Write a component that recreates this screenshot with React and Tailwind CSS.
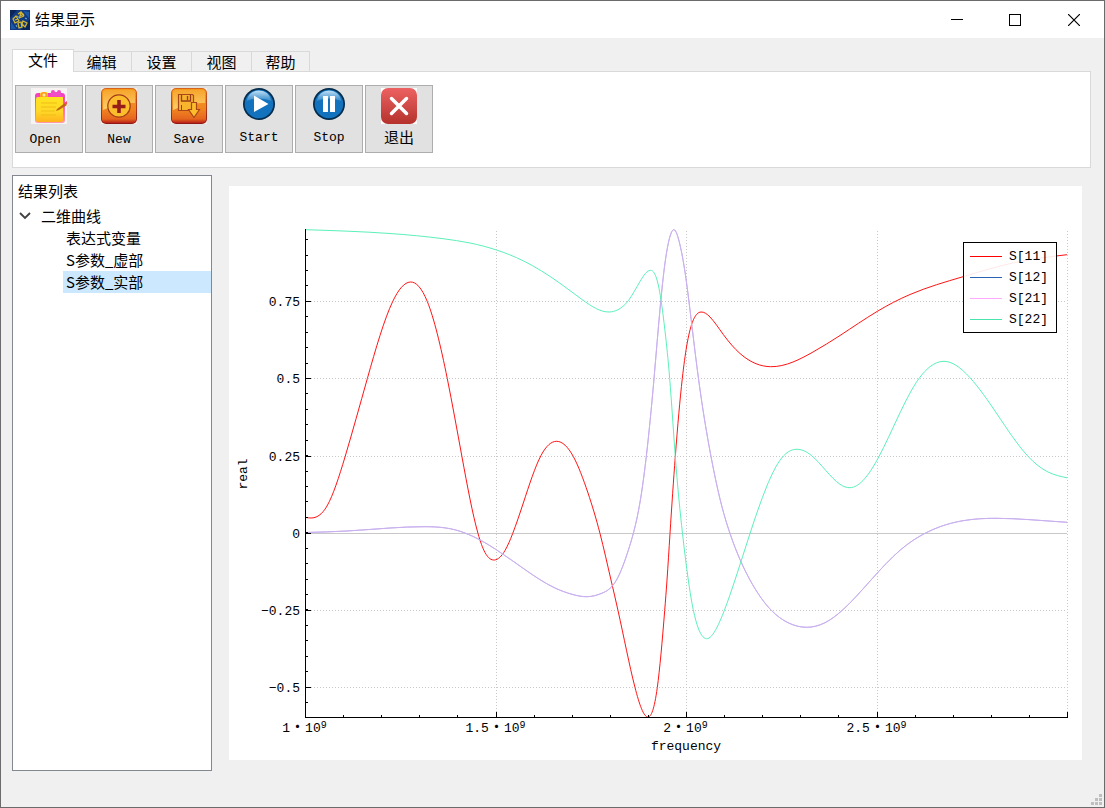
import { useState } from 'react'

const TABS = ['文件', '编辑', '设置', '视图', '帮助']

const UI_FONT = "font-['Noto_Sans_CJK_SC',sans-serif]"
const MONO_FONT = "font-['Liberation_Mono','Noto_Sans_CJK_SC',monospace]"

const RESULTS = ['表达式变量', 'S参数_虚部', 'S参数_实部']

const TRANSMISSION = [
  [306, 532.5], [347, 531], [390, 528], [425, 526.7], [446, 528], [465, 533], [496, 549.5], [527, 571], [555, 588],
  [572, 594.3], [587, 596.7], [602, 593.2], [616.5, 580], [628.5, 549.7], [633.3, 533.5], [641.5, 493], [646.3, 456.5],
  [654, 378.7], [660.3, 306], [665, 263], [668.3, 243.3], [674, 229.7], [680, 245], [685, 272], [692, 326.7],
  [698.5, 378.7], [711, 456.5], [720, 499], [730, 533.5], [750, 580], [771.5, 610.5], [788, 622.7], [806.7, 627.3],
  [825, 622.7], [842.3, 610.3], [871, 580], [900.7, 549.7], [925, 533.3], [940, 526.7], [963, 520.7], [996, 518.3],
  [1030, 519.7], [1067, 522.3],
]

const SERIES = [
  {
    name: 'S[11]',
    legend: '#ff0000',
    stroke: '#ff1414',
    points: [
      [306, 517.5], [311, 518], [327, 506], [345, 457], [367.3, 378.7], [392.7, 301.5], [410.3, 282], [427.3, 301.5],
      [447.3, 378.7], [462, 457], [478, 533.5], [485, 552.5], [494.5, 560], [505, 550.5], [512.7, 533.5], [523.3, 503],
      [541, 455.5], [556.7, 441.3], [573.3, 456.5], [588, 493], [600, 533.5], [611, 580], [618, 610.5], [635, 687.5],
      [648, 717], [657.3, 687.5], [664.7, 610.5], [667, 580], [670, 533.5], [675.3, 456.5], [682.3, 378.5],
      [686.7, 346], [692.3, 322.5], [701, 312], [710, 317], [723.3, 334.5], [740, 353.5], [756, 363.7], [770.7, 366.7],
      [793, 362], [813, 352], [840, 335.5], [877, 311.5], [910, 294.5], [963, 276.7], [1015, 262.5], [1067, 254.7],
    ],
  },
  { name: 'S[12]', legend: '#2a62b4', stroke: '#c9b0ef', points: TRANSMISSION },
  { name: 'S[21]', legend: '#ffaaff', stroke: '#c9b0ef', points: TRANSMISSION },
  {
    name: 'S[22]',
    legend: '#48e6ac',
    stroke: '#5cf0ba',
    points: [
      [306, 229.7], [390, 233.5], [443, 238.7], [470, 243], [496.5, 250], [523, 260.7], [560, 283.3], [582, 299.5],
      [596.5, 308.7], [609, 312], [618, 309.7], [628.3, 300.7], [640, 281.5], [650.5, 270.3], [658.3, 285],
      [661, 300], [665, 331], [669.7, 378.7], [675.3, 456.5], [682.5, 533.5], [688.3, 580], [692, 603.3],
      [697, 624.5], [706.5, 638.7], [716.5, 628.3], [724.3, 610.5], [735, 580], [750, 533.5], [766.5, 487],
      [781.7, 458], [796, 449.3], [811.7, 455.7], [840, 484.3], [850, 487.7], [863, 480.5], [879, 456.5],
      [898, 417], [919, 378.5], [930, 366.7], [943, 361.3], [955, 364.7], [970, 377.7], [997, 414], [1028, 456.3],
      [1048, 472], [1067, 477.8],
    ],
  },
]

const Y_TICKS = [
  { label: '0.75', y: 301.5 },
  { label: '0.5', y: 378.5 },
  { label: '0.25', y: 456.5 },
  { label: '0', y: 533.5 },
  { label: '−0.25', y: 610.5 },
  { label: '−0.5', y: 687.5 },
]

const X_TICKS = [
  { label: '1', x: 305.5 },
  { label: '1.5', x: 496.5 },
  { label: '2', x: 686.5 },
  { label: '2.5', x: 877.5 },
  { label: '', x: 1067.5 },
]

// Natural cubic spline through the points, written as bezier segments
function smoothPath(points) {
  const n = points.length
  const h = []
  const slope = []
  for (let i = 0; i < n - 1; i++) {
    h.push(points[i + 1][0] - points[i][0])
    slope.push((points[i + 1][1] - points[i][1]) / h[i])
  }
  const c = [0.5]
  const t = [1.5 * slope[0]]
  for (let i = 1; i < n; i++) {
    const last = i === n - 1
    const lower = last ? 1 : h[i]
    const upper = last ? 0 : h[i - 1]
    const diag = last ? 2 : 2 * (h[i - 1] + h[i])
    const rhs = last ? 3 * slope[i - 1] : 3 * (h[i] * slope[i - 1] + h[i - 1] * slope[i])
    const m = diag - lower * c[i - 1]
    c.push(upper / m)
    t.push((rhs - lower * t[i - 1]) / m)
  }
  for (let i = n - 2; i >= 0; i--) {
    t[i] -= c[i] * t[i + 1]
  }
  let d = `M${points[0][0]} ${points[0][1]}`
  for (let i = 0; i < n - 1; i++) {
    const [x0, y0] = points[i]
    const [x1, y1] = points[i + 1]
    const s = h[i] / 3
    d += `C${x0 + s} ${y0 + s * t[i]} ${x1 - s} ${y1 - s * t[i + 1]} ${x1} ${y1}`
  }
  return d
}

function AppLogo() {
  return (
    <svg viewBox="0 0 20 20" className="h-5 w-5" aria-hidden="true">
      <rect width="20" height="20" fill="#123a80" />
      <path d="M0 0h7L0 8zM20 9v11h-9z" fill="#0a2558" />
      <path d="M13 1l6 1v6zM1 12l5 7H1z" fill="#1d58a8" />
      <g fill="none" stroke="#d0b634" strokeWidth="1.3">
        <path d="M3 9l3-3 3 5-4 2zM5 10l3-1M8 4l3-2 3 4M11 2l-1 4 4-2M9 8l5-2" />
        <path d="M8 13l3-1 1 5-3 1zM13 11l4 2-2 4-3-3z" />
      </g>
      <path d="M7 6l3 2M15 8l2 1M6 15l1 2" stroke="#6fb6dc" strokeWidth="1" />
    </svg>
  )
}

function OpenIcon() {
  return (
    <svg viewBox="0 0 36 36" className="h-9 w-9" aria-hidden="true">
      <defs>
        <linearGradient id="note" x1="0" y1="0" x2="0" y2="1">
          <stop offset="0" stopColor="#ffe81c" />
          <stop offset=".65" stopColor="#ffd828" />
          <stop offset="1" stopColor="#ffb31c" />
        </linearGradient>
        <linearGradient id="rim" x1="0" y1="0" x2="0" y2="1">
          <stop offset="0" stopColor="#f43cc0" />
          <stop offset="1" stopColor="#ff9aa8" />
        </linearGradient>
      </defs>
      <rect width="36" height="36" fill="#f6f3f3" />
      <rect x="4" y="5" width="30" height="30" rx="3" fill="url(#rim)" />
      <path d="M20 8V4q0-2 2-2t2 2h2q0-2 2-2t2 2v4z" fill="#f04ec4" />
      <path d="M5 11q0-2 2-2h2V6q0-2 3-2h3q2 0 2 2v3h15v23q0 2-2 2H7q-2 0-2-2z" fill="url(#note)" />
      <path d="M9 9q0-5 4-5t4 5z" fill="#ff9b28" />
      <circle cx="13" cy="7" r="1.5" fill="#fff0a0" />
      <path d="M10 15h16M10 19h15M10 23h14M10 27h15" stroke="#efbd16" strokeWidth="1" />
      <path d="M26 21l8-6 2 2-8 5-3 1z" fill="#bf6410" />
      <path d="M33 15l3-2v3l-2 1z" fill="#ed4b66" />
    </svg>
  )
}

function OrangeTile({ id, children }) {
  return (
    <svg viewBox="0 0 36 36" className="h-9 w-9" aria-hidden="true">
      <defs>
        <linearGradient id={id} x1="0" y1="0" x2="0" y2="1">
          <stop offset="0" stopColor="#f39a1c" />
          <stop offset=".6" stopColor="#f08420" />
          <stop offset=".88" stopColor="#e5661e" />
          <stop offset="1" stopColor="#b82018" />
        </linearGradient>
        <linearGradient id={`${id}-rim`} x1="0" y1="0" x2="0" y2="1">
          <stop offset="0" stopColor="#d9651c" />
          <stop offset="1" stopColor="#8f1616" />
        </linearGradient>
        <linearGradient id={`${id}-gloss`} x1="0" y1="0" x2="0" y2="1">
          <stop offset="0" stopColor="#f7a52c" />
          <stop offset="1" stopColor="#fbd06c" />
        </linearGradient>
      </defs>
      <rect width="36" height="36" fill="#f4efea" />
      <rect width="36" height="36" rx="5" fill={`url(#${id}-rim)`} />
      <rect x="1" y="1" width="34" height="34" rx="4" fill={`url(#${id})`} />
      <path d="M5 2h26q3 0 3 3v10Q18 14 2 22V5q0-3 3-3z" fill={`url(#${id}-gloss)`} />
      {children}
    </svg>
  )
}

function NewIcon() {
  return (
    <OrangeTile id="tile-new">
      <circle cx="18" cy="18" r="11.2" fill="#fbbd2c" stroke="#a33c18" strokeWidth="1.2" />
      <path d="M18 12v13M11.5 18.5h13" stroke="#971d18" strokeWidth="3.6" />
    </OrangeTile>
  )
}

function SaveIcon() {
  return (
    <OrangeTile id="tile-save">
      <path d="M7.5 6.5h14l1 1v15h-15z" fill="#f7b42c" stroke="#a8481a" strokeWidth="1.2" />
      <path d="M10.5 7v6h9V7M16.5 8v4" fill="none" stroke="#9b3d1a" strokeWidth="1.3" />
      <path d="M10.5 22v-5" fill="none" stroke="#9b3d1a" strokeWidth="1" />
      <path d="M20.5 14.5h5v7h3l-5.500 8-5.500-8h3z" fill="#fbbd2c" stroke="#a8481a" strokeWidth="1.2" />
    </OrangeTile>
  )
}

function BlueDisc({ id, children }) {
  return (
    <svg viewBox="0 0 32 32" className="mb-0.5 h-8 w-8" aria-hidden="true">
      <defs>
        <linearGradient id={id} x1="0" y1="0" x2="0" y2="1">
          <stop offset="0" stopColor="#bfe0f6" />
          <stop offset="1" stopColor="#2f86c8" />
        </linearGradient>
      </defs>
      <circle cx="16" cy="16" r="16" fill="#052c4c" />
      <circle cx="16" cy="16" r="14.3" fill="#1272bd" />
      <path d="M3.5 13Q6 2.5 16 2.5T28.5 13Q16 8 3.5 13z" fill={`url(#${id})`} />
      {children}
    </svg>
  )
}

function StartIcon() {
  return (
    <BlueDisc id="gloss-start">
      <path d="M11 7.5v16.5L25.5 16z" fill="#fff" />
    </BlueDisc>
  )
}

function StopIcon() {
  return (
    <BlueDisc id="gloss-stop">
      <path d="M10 8h5v16h-5zM17 8h5v16h-5z" fill="#fff" />
    </BlueDisc>
  )
}

function ExitIcon() {
  return (
    <svg viewBox="0 0 36 36" className="h-9 w-9" aria-hidden="true">
      <defs>
        <linearGradient id="exit-red" x1="0" y1="0" x2="0" y2="1">
          <stop offset="0" stopColor="#ec6262" />
          <stop offset="1" stopColor="#b5322c" />
        </linearGradient>
      </defs>
      <rect width="36" height="36" fill="#fff" />
      <rect width="36" height="36" rx="7" fill="url(#exit-red)" />
      <path d="M10.5 10.5l15 15M25.5 10.5l-15 15" stroke="#fff" strokeWidth="3.5" strokeLinecap="round" />
    </svg>
  )
}

const TOOLS = [
  { label: 'Open ', Icon: OpenIcon, size: 'text-[13px]' },
  { label: 'New', Icon: NewIcon, size: 'text-[13px]' },
  { label: 'Save', Icon: SaveIcon, size: 'text-[13px]' },
  { label: 'Start', Icon: StartIcon, size: 'text-[13px]' },
  { label: 'Stop', Icon: StopIcon, size: 'text-[13px]' },
  { label: '退出', Icon: ExitIcon, size: 'text-[15px]' },
]

function TitleBar() {
  return (
    <header className="flex h-[37px] items-center bg-white pl-[9px]">
      <AppLogo />
      <h1 className={`ml-[5px] flex-1 pb-0.5 text-[15px] leading-5 ${UI_FONT}`}>结果显示</h1>
      <button type="button" aria-label="Minimize" className="flex h-full w-[58px] items-center justify-center">
        <svg width="12" height="12" aria-hidden="true" shapeRendering="crispEdges">
          <path d="M0 5.5h12" stroke="#000" />
        </svg>
      </button>
      <button type="button" aria-label="Maximize" className="flex h-full w-[58px] items-center justify-center">
        <svg width="12" height="12" aria-hidden="true" shapeRendering="crispEdges">
          <rect x=".5" y=".5" width="11" height="11" fill="none" stroke="#000" />
        </svg>
      </button>
      <button type="button" aria-label="Close" className="flex h-full w-[60px] items-center justify-center">
        <svg width="12" height="12" aria-hidden="true">
          <path d="M0 0l12 12M12 0L0 12" stroke="#000" strokeWidth="1.2" />
        </svg>
      </button>
    </header>
  )
}

function Ribbon() {
  const [active, setActive] = useState(0)

  return (
    <section className="mr-[13px] ml-[11px]">
      <div role="tablist" className="flex items-end">
        {TABS.map((tab, i) => (
          <button
            key={tab}
            type="button"
            role="tab"
            aria-selected={i === active}
            onClick={() => setActive(i)}
            className={
              i === active
                ? `relative z-10 -mr-0.5 -mb-px h-[23px] w-[62px] border border-b-0 border-[#d9d9d9] bg-white pb-0.5 text-[15px] leading-5 ${UI_FONT}`
                : `h-5 w-[60px] border border-b-0 border-l-0 border-[#d9d9d9] bg-[#f0f0f0] text-[15px] leading-5 last:w-[58px] ${UI_FONT}`
            }
          >
            {tab}
          </button>
        ))}
      </div>
      <div className="flex h-[97px] gap-0.5 border border-[#d9d9d9] bg-white px-0.5 pt-[13px]">
        {TOOLS.map(({ label, Icon, size }) => (
          <button
            key={label}
            type="button"
            className="flex h-[68px] w-[68px] flex-col items-center border border-[#adadad] bg-[#e1e1e1] pt-0.5"
          >
            <Icon />
            <span className={`mt-1.5 leading-5 whitespace-pre ${size} ${MONO_FONT}`}>{label}</span>
          </button>
        ))}
      </div>
    </section>
  )
}

function ResultTree() {
  const [selected, setSelected] = useState('S参数_实部')

  return (
    <nav className={`w-[200px] shrink-0 border border-[#828790] bg-white text-[15px] leading-[22px] ${UI_FONT}`}>
      <h2 className="mb-[3px] pt-1 pl-[5px]">结果列表</h2>
      <div className="flex items-center">
        <svg width="12" height="8" className="mr-[10px] ml-[6px]" aria-hidden="true">
          <path d="M1 1l5 5 5-5" fill="none" stroke="#404040" strokeWidth="1.8" />
        </svg>
        二维曲线
      </div>
      <ul className="pl-[50px]">
        {RESULTS.map((name) => (
          <li key={name}>
            <button
              type="button"
              onClick={() => setSelected(name)}
              className={name === selected ? 'block w-full bg-[#cce8ff] pl-[3px] text-left' : 'block w-full pl-[3px] text-left'}
            >
              {name}
            </button>
          </li>
        ))}
      </ul>
    </nav>
  )
}

function Chart() {
  const xSub = Array.from({ length: 21 }, (_, i) => Math.round(305 + i * 38.1) + 0.5)
  const ySub = Array.from({ length: 32 }, (_, i) => Math.round(702 - i * 15.43) + 0.5).filter((y) => y > 230)

  return (
    <svg viewBox="229 186 853 574" className={`block h-auto w-full bg-white text-[13px] ${MONO_FONT}`} role="img" aria-label="real / frequency">
      <g shapeRendering="crispEdges" fill="none">
        <g stroke="#c8c8c8" strokeDasharray="1 2">
          {X_TICKS.slice(1).map(({ x }) => (
            <path key={x} d={`M${x} 231V717`} />
          ))}
          {Y_TICKS.filter(({ label }) => label !== '0').map(({ y }) => (
            <path key={y} d={`M308 ${y}H1067`} />
          ))}
        </g>
        <path d="M306 533.5H1067" stroke="#c8c8c8" />
      </g>

      {SERIES.map((s) => (
        <path key={s.name} d={smoothPath(s.points)} fill="none" stroke={s.stroke} />
      ))}

      <g shapeRendering="crispEdges" stroke="#000" fill="none">
        <path d="M305.5 229V717.5H1068" />
        {Y_TICKS.map(({ y }) => (
          <path key={y} d={`M306 ${y}h5`} />
        ))}
        {ySub.map((y) => (
          <path key={y} d={`M306 ${y}h2`} />
        ))}
        {X_TICKS.map(({ x }) => (
          <path key={x} d={`M${x} 717v-5`} />
        ))}
        {xSub.map((x) => (
          <path key={x} d={`M${x} 717v-2`} />
        ))}
      </g>

      {Y_TICKS.map(({ label, y }) => (
        <text key={label} x="300" y={y + 4.5} textAnchor="end">
          {label}
        </text>
      ))}
      {X_TICKS.filter(({ label }) => label).map(({ label, x }) => (
        <text key={label} x={x - 1} y="732" textAnchor="middle">
          {label}
          <tspan className="font-['Noto_Sans_CJK_SC',sans-serif] text-[15px]">·</tspan>
          10
          <tspan dy="-4" className="text-[10px]">9</tspan>
        </text>
      ))}
      <text x="686" y="750" textAnchor="middle">frequency</text>
      <text transform="translate(247 474) rotate(-90)" textAnchor="middle">real</text>

      <g>
        <rect x="963.5" y="242.5" width="93" height="90" fill="#fff" fillOpacity=".9" stroke="#000" shapeRendering="crispEdges" />
        {SERIES.map((s, i) => (
          <g key={s.name}>
            <path d={`M970 ${256.5 + i * 21}h32`} fill="none" stroke={s.legend} shapeRendering="crispEdges" />
            <text x="1009" y={260 + i * 21}>{s.name}</text>
          </g>
        ))}
      </g>
    </svg>
  )
}

export default function App() {
  return (
    <div className="flex min-h-screen flex-col border border-[#6b6b6b] bg-[#f0f0f0] text-black">
      <TitleBar />
      <div className="h-[11px]" />
      <Ribbon />
      <main className="mt-[7px] mr-[22px] ml-[11px] flex flex-1 gap-[17px]">
        <ResultTree />
        <div className="min-w-0 flex-1 pt-[11px]">
          <Chart />
        </div>
      </main>
      <footer className="flex h-9 items-end justify-end p-0.5">
        <svg width="11" height="11" aria-hidden="true" fill="#bfbfbf" shapeRendering="crispEdges">
          <path d="M8 0h3v3H8zM4 4h3v3H4zM8 4h3v3H8zM0 8h3v3H0zM4 8h3v3H4zM8 8h3v3H8z" />
        </svg>
      </footer>
    </div>
  )
}
